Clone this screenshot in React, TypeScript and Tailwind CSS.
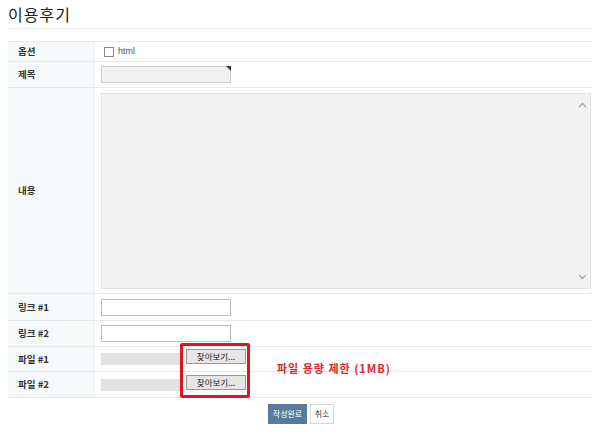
export default function App() {
  const font = { fontFamily: '"Noto Sans CJK KR", "Noto Sans", sans-serif' };
  const labelCls = "w-[87px] shrink-0 bg-[#f6f9fa] border-r border-[#eef2f3] px-[10px] text-[9.5px] font-bold text-[#333] flex items-center";
  const rowCls = "flex border-b border-[#e8e8e8]";

  return (
    <div className="w-[600px] h-[433px] bg-white relative" style={font}>
      <div className="px-[8px] pt-[3px]">
        <h1 className="text-[16px] tracking-[1px] text-[#222] leading-[22px] pb-[3px] border-b border-[#eaeaea]">이용후기</h1>
      </div>

      <div className="mx-[8px] mt-[12px] border-t border-[#e8e8e8]">
        {/* 옵션 */}
        <div className={rowCls + " h-[20px]"}>
          <div className={labelCls}>옵션</div>
          <div className="flex items-center pl-[9px] gap-[4px]">
            <span className="w-[10px] h-[10px] border border-[#888] bg-white" />
            <span className="text-[9px] text-[#555]" style={{ fontFamily: '"Liberation Sans", sans-serif' }}>html</span>
          </div>
        </div>

        {/* 제목 */}
        <div className={rowCls + " h-[26px]"}>
          <div className={labelCls}>제목</div>
          <div className="flex items-center pl-[6px]">
            <div className="relative w-[130px] h-[17px] bg-[#f2f2f2] border border-[#cfcfcf]">
              <span className="absolute right-[-1px] top-[-1px] w-0 h-0 border-t-[5px] border-t-[#333] border-l-[5px] border-l-transparent" />
            </div>
          </div>
        </div>

        {/* 내용 */}
        <div className={rowCls + " h-[206px]"}>
          <div className={labelCls}>내용</div>
          <div className="flex items-center pl-[6px] pr-[1px] flex-1">
            <div className="relative flex-1 h-[196px] bg-[#f3f3f3] border border-[#e4e4e4]">
              <div className="absolute right-0 top-0 bottom-0 w-[16px] flex flex-col justify-between items-center py-[8px]">
                <svg width="9" height="6" viewBox="0 0 9 6"><path d="M1 5 L4.5 1.5 L8 5" fill="none" stroke="#a8a8a8" strokeWidth="1.4" /></svg>
                <svg width="9" height="6" viewBox="0 0 9 6"><path d="M1 1 L4.5 4.5 L8 1" fill="none" stroke="#a8a8a8" strokeWidth="1.4" /></svg>
              </div>
            </div>
          </div>
        </div>

        {/* 링크 #1 */}
        <div className={rowCls + " h-[27px]"}>
          <div className={labelCls}>링크 #1</div>
          <div className="flex items-center pl-[6px]">
            <div className="w-[130px] h-[17px] bg-white border border-[#bdbdbd]" />
          </div>
        </div>

        {/* 링크 #2 */}
        <div className={rowCls + " h-[26px]"}>
          <div className={labelCls}>링크 #2</div>
          <div className="flex items-center pl-[6px]">
            <div className="w-[130px] h-[17px] bg-white border border-[#bdbdbd]" />
          </div>
        </div>

        {/* 파일 #1 */}
        <div className={rowCls + " h-[25px]"}>
          <div className={labelCls}>파일 #1</div>
          <div className="flex items-center pl-[6px]">
            <div className="w-[80px] h-[12px] bg-[#e3e3e3]" />
            <button className="ml-[5px] w-[60px] h-[15px] bg-[#e6e6e6] border border-[#9a9a9a] text-[8.5px] text-[#222] leading-none -mt-[6px]">찾아보기...</button>
          </div>
        </div>

        {/* 파일 #2 */}
        <div className={rowCls + " h-[26px]"}>
          <div className={labelCls}>파일 #2</div>
          <div className="flex items-center pl-[6px]">
            <div className="w-[80px] h-[12px] bg-[#e3e3e3]" />
            <button className="ml-[5px] w-[60px] h-[15px] bg-[#e6e6e6] border border-[#9a9a9a] text-[8.5px] text-[#222] leading-none -mt-[4px]">찾아보기...</button>
          </div>
        </div>
      </div>

      {/* annotation */}
      <div className="absolute left-[180px] top-[343px] w-[70px] h-[55px] border-[3px] border-[#e0141e] rounded-[2px]" />
      <div className="absolute left-[277px] top-[360px] text-[11px] font-bold text-[#e0262e] tracking-[1px]">파일 용량 제한 (1MB)</div>

      <div className="flex justify-center gap-[3px] mt-[6px] pl-[2px]">
        <button className="w-[39px] h-[20px] bg-[#587a9c] text-white text-[8px]">작성완료</button>
        <button className="w-[24px] h-[20px] bg-white border border-[#d6d6d6] text-[#333] text-[8px]">취소</button>
      </div>
    </div>
  );
}
